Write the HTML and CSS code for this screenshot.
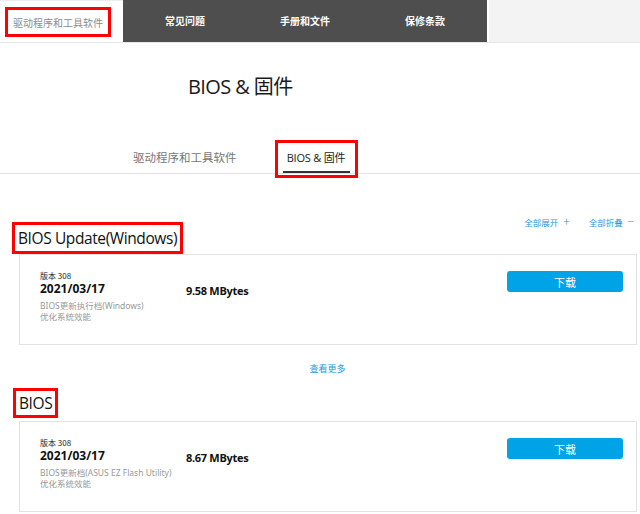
FILE: index.html
```html
<!DOCTYPE html>
<html lang="zh">
<head>
<meta charset="utf-8">
<link rel="stylesheet" href="styles.css">
</head>
<body>
<nav class="topnav">
  <div class="tab-first"><span class="mark first-label">驱动程序和工具软件</span></div>
  <div class="tabs-dark">
    <span class="dtab">常见问题</span>
    <span class="dtab">手册和文件</span>
    <span class="dtab">保修条款</span>
  </div>
  <div class="nav-rest"></div>
</nav>

<h1 class="page-title">BIOS &amp; 固件</h1>

<div class="subtabs">
  <span class="subtab">驱动程序和工具软件</span>
  <span class="mark subtab-box"><span class="subtab active">BIOS &amp; 固件</span></span>
</div>

<div class="toolbar">
  <span class="tool">全部展开 <span class="sym">+</span></span>
  <span class="tool">全部折叠 <span class="sym">−</span></span>
</div>

<section class="group">
  <h2 class="mark group-title">BIOS Update(Windows)</h2>
  <div class="card">
    <div class="info">
      <div class="ver">版本 308</div>
      <div class="main-row"><span class="date">2021/03/17</span><span class="size">9.58 MBytes</span></div>
      <div class="desc">BIOS更新执行档(Windows)<br>优化系统效能</div>
    </div>
    <button class="dl">下载</button>
  </div>
  <div class="more">查看更多</div>
</section>

<section class="group">
  <h2 class="mark group-title bios">BIOS</h2>
  <div class="card">
    <div class="info">
      <div class="ver">版本 308</div>
      <div class="main-row"><span class="date">2021/03/17</span><span class="size">8.67 MBytes</span></div>
      <div class="desc">BIOS更新档(ASUS EZ Flash Utility)<br>优化系统效能</div>
    </div>
    <button class="dl">下载</button>
  </div>
</section>
</body>
</html>
```

FILE: styles.css
```css
* { box-sizing: border-box; }
html, body { margin: 0; padding: 0; background: #fff; }
body {
  font-family: "Open Sans", "Noto Sans CJK SC", sans-serif;
  color: #1a1a1a;
  width: 640px;
  overflow: hidden;
}
.mark { border: 3px solid #f00; }

.topnav {
  display: flex;
  height: 43px;
  border-bottom: 1px solid #e6e6e6;
}
.tab-first {
  width: 123px;
  background: #fff;
  border-top: 1px solid #ececec;
  padding: 6px 0 0 5px;
}
.first-label {
  display: flex;
  align-items: center;
  justify-content: center;
  width: 106px;
  height: 30px;
  font-family: "Noto Sans CJK SC", sans-serif;
  font-size: 10px;
  color: #8c8c8c;
}
.tabs-dark {
  width: 364px;
  background: #4e4e4e;
  display: flex;
  align-items: center;
  padding-left: 2px;
}
.dtab {
  width: 120px;
  text-align: center;
  color: #fff;
  font-family: "Noto Sans CJK SC", sans-serif;
  font-weight: 700;
  font-size: 10px;
  padding-bottom: 2px;
}
.nav-rest {
  flex: 1;
  background: #f3f3f3;
  border-left: 2px solid #fff;
}

.page-title {
  margin: 30px 0 0 188px;
  font-weight: 400;
  font-size: 20px;
  letter-spacing: -0.6px;
  line-height: 28px;
  color: #1a1a1a;
}

.subtabs {
  margin-top: 36px;
  display: flex;
  align-items: flex-end;
  padding-left: 133px;
  border-bottom: 1px solid #e2e2e2;
  height: 37px;
}
.subtab {
  font-family: "Noto Sans CJK SC", sans-serif;
  font-size: 11.5px;
  color: #777;
  line-height: 16px;
  padding-bottom: 8px;
}
.subtab-box {
  margin-left: 38px;
  width: 83px;
  height: 38px;
  margin-bottom: -5px;
  padding: 0 5px;
  display: flex;
  align-items: flex-end;
}
.subtab.active {
  color: #222;
  width: 100%;
  text-align: center;
  font-size: 11px;
  letter-spacing: -0.2px;
  border-bottom: 2px solid #333;
  padding-bottom: 5px;
  margin-bottom: 2px;
  font-family: "Open Sans", "Noto Sans CJK SC", sans-serif;
}

.toolbar {
  display: flex;
  justify-content: flex-end;
  gap: 19px;
  padding-right: 6px;
  margin-top: 40px;
  margin-bottom: -6px;
  height: 14px;
}
.tool {
  font-family: "Noto Sans CJK SC", sans-serif;
  font-size: 8.5px;
  color: #1c9ae0;
  line-height: 14px;
}
.sym { font-size: 12px; margin-left: 3px; font-weight: 300; }

.group { padding: 0 3px 0 12px; }
.group-title {
  margin: 0;
  display: inline-block;
  font-weight: 400;
  font-size: 15.5px;
  letter-spacing: -0.4px;
  line-height: 22px;
  padding: 2px 3px;
  color: #111;
}
.group-title.bios { margin-left: 1px; margin-top: 12px; padding: 1px 3px; }
.card {
  margin-left: 7px;
  border: 1px solid #e2e2e2;
  height: 91px;
  display: flex;
  justify-content: space-between;
  padding: 15px 13px 0 20px;
}
.group:last-of-type .card { margin-top: 3px; }
.info { width: 300px; }
.ver {
  font-family: "Noto Sans CJK SC", sans-serif;
  font-size: 8px;
  line-height: 11px;
  color: #222;
}
.main-row { display: flex; line-height: 15px; }
.date {
  width: 146px;
  font-weight: 700;
  font-size: 12px;
  color: #111;
}
.size { font-weight: 700; font-size: 11px; letter-spacing: -0.3px; color: #111; margin-top: 2px; }
.desc {
  margin-top: 2px;
  font-family: "Noto Sans", "Noto Sans CJK SC", sans-serif;
  font-size: 8.5px;
  line-height: 11px;
  color: #999;
}
.dl {
  width: 116px;
  height: 21px;
  border: none;
  border-radius: 3px;
  background: #00a4e6;
  color: #fff;
  font-family: "Noto Sans CJK SC", sans-serif;
  font-size: 11px;
  padding: 0;
  margin-top: 1px;
}
.more {
  text-align: center;
  margin-top: 17px;
  padding-left: 6px;
  font-family: "Noto Sans CJK SC", sans-serif;
  font-size: 9px;
  color: #1c9ae0;
  line-height: 14px;
}
```
